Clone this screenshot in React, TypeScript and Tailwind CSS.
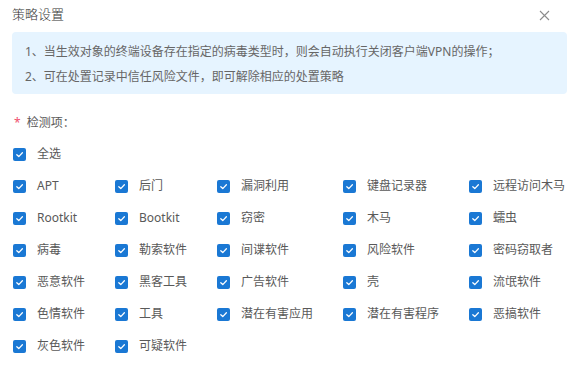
import React from 'react'

const ROWS: string[][] = [
  ['APT', '后门', '漏洞利用', '键盘记录器', '远程访问木马'],
  ['Rootkit', 'Bootkit', '窃密', '木马', '蠕虫'],
  ['病毒', '勒索软件', '间谍软件', '风险软件', '密码窃取者'],
  ['恶意软件', '黑客工具', '广告软件', '壳', '流氓软件'],
  ['色情软件', '工具', '潜在有害应用', '潜在有害程序', '恶搞软件'],
  ['灰色软件', '可疑软件'],
]

const Check = ({ label }: { label: string }) => (
  <label className="flex h-[32px] items-center">
    <span className="flex h-[13px] w-[13px] items-center justify-center rounded-[2px] bg-[#1a78d4]">
      <svg width="9" height="9" viewBox="0 0 10 10" fill="none">
        <path d="M2 5.2 L4.2 7.3 L8.2 3" stroke="#fff" strokeWidth="1.4" strokeLinecap="round" strokeLinejoin="round" />
      </svg>
    </span>
    <span className="ml-[11px] whitespace-nowrap text-[12px] text-[#595959]">{label}</span>
  </label>
)

const App: React.FC = () => {
  return (
    <div
      className="h-[368px] w-[579px] bg-white px-[12px]"
      style={{ fontFamily: '"Noto Sans", "Noto Sans CJK SC", sans-serif' }}
    >
      <div className="flex h-[32px] items-center justify-between pb-[2px]">
        <h1 className="text-[13px] font-light text-[#333]">策略设置</h1>
        <svg width="11" height="11" viewBox="0 0 11 11" className="mr-[17px]">
          <path d="M1 1 L10 10 M10 1 L1 10" stroke="#8c8c8c" strokeWidth="1.1" />
        </svg>
      </div>

      <div className="rounded-[4px] bg-[#e6f4ff] px-[13px] pt-[7px] pb-[5px] text-[12px] leading-[25px] text-[#666]">
        <p>1、当生效对象的终端设备存在指定的病毒类型时，则会自动执行关闭客户端VPN的操作；</p>
        <p>2、可在处置记录中信任风险文件，即可解除相应的处置策略</p>
      </div>

      <div className="mt-[19px] flex h-[20px] items-center text-[12px] text-[#595959]">
        <span className="ml-[2px] mr-[6px] text-[#f0506e]">*</span>
        检测项：
      </div>

      <div className="mt-[5px] pl-[1px]">
        <Check label="全选" />
        {ROWS.map((row, i) => (
          <div key={i} className="grid grid-cols-[102px_102px_126px_126px_auto]">
            {row.map((l) => (
              <Check key={l} label={l} />
            ))}
          </div>
        ))}
      </div>
    </div>
  )
}

export default App
